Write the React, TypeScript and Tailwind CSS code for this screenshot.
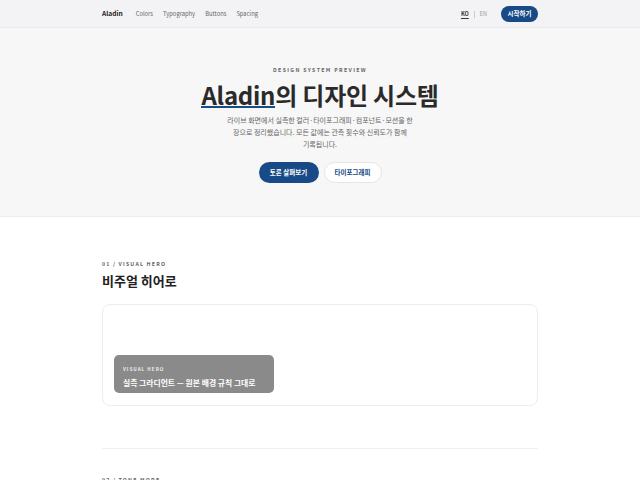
import React from "react";

const font = { fontFamily: '"Noto Sans CJK KR", "Noto Sans", sans-serif' };

function Header() {
  return (
    <header className="h-[28px] border-b border-[#e9e9ec] bg-[#f3f3f5]">
      <div className="mx-auto flex h-full w-[436px] items-center pt-px">
        <span className="text-[6.6px] font-bold text-[#222]">Aladin</span>
        <nav className="ml-[13px] flex gap-[10px] text-[5.8px] text-[#666]">
          <span>Colors</span>
          <span>Typography</span>
          <span>Buttons</span>
          <span>Spacing</span>
        </nav>
        <div className="ml-auto flex items-center">
          <span className="text-[5.5px] font-bold text-[#333] underline underline-offset-2">KO</span>
          <span className="mx-[5px] h-[7px] w-px bg-[#ccc]" />
          <span className="text-[5.5px] text-[#999]">EN</span>
          <button className="ml-[14px] h-[16px] w-[37px] rounded-full bg-[#174a86] text-[6.5px] font-bold text-white">
            시작하기
          </button>
        </div>
      </div>
    </header>
  );
}

function Hero() {
  return (
    <section className="border-b border-[#ececec] bg-[#f7f7f7] pb-[33px] pt-[38px]">
      <div className="flex flex-col items-center text-center">
        <p className="text-[5.3px] font-bold leading-[8px] tracking-[0.25em] text-[#666]">DESIGN SYSTEM PREVIEW</p>
        <h1 className="mt-[6px] text-[24px] font-bold leading-[30px] tracking-[-0.01em] text-[#2a2a2a]">
          <span className="relative inline-block">
            Aladin
            <span className="absolute bottom-[2px] left-0 h-[2.5px] w-full bg-[#174a86]" />
          </span>
          의 디자인 시스템
        </h1>
        <p className="mt-[4px] w-[196px] break-keep text-[7px] leading-[12px] text-[#666]">
          라이브 화면에서 실측한 컬러·타이포그래피·컴포넌트·모션을 한 장으로 정리했습니다. 모든 값에는 관측 횟수와 신뢰도가 함께 기록됩니다.
        </p>
        <div className="mt-[12px] flex gap-[5px]">
          <button className="h-[21px] w-[60px] rounded-full bg-[#174a86] text-[6.5px] font-bold text-white">
            토론 살펴보기
          </button>
          <button className="h-[21px] w-[58px] rounded-full border border-[#e6e6e6] bg-white text-[6.5px] font-bold text-[#174a86]">
            타이포그래피
          </button>
        </div>
      </div>
    </section>
  );
}

function VisualHero() {
  return (
    <section className="mx-auto w-[436px] pt-[43px]">
      <p className="text-[5.3px] font-bold leading-[8px] tracking-[0.22em] text-[#666]">01 / VISUAL HERO</p>
      <h2 className="mt-[4px] text-[13px] font-bold leading-[18px] text-[#222]">비주얼 히어로</h2>
      <div className="mt-[14px] flex h-[102px] flex-col justify-end rounded-[8px] border border-[#ececec] bg-white px-[11px] pb-[12px]">
        <div className="w-[160px] rounded-[5px] bg-[#8a8a8a] px-[9px] pb-[5.5px] pt-[11px]">
          <p className="text-[4.6px] font-bold leading-[6px] tracking-[0.22em] text-[#eee]">VISUAL HERO</p>
          <p className="mt-[4.5px] whitespace-nowrap text-[7.8px] font-bold leading-[11px] text-white">
            실측 그라디언트 — 원본 배경 규칙 그대로
          </p>
        </div>
      </div>
      <div className="mt-[42px] h-px bg-[#f0f0f0]" />
      <p className="mt-[27px] text-[5.3px] font-bold leading-[8px] tracking-[0.22em] text-[#666]">02 / TONE MODE</p>
    </section>
  );
}

export default function App() {
  return (
    <div className="min-h-screen bg-white" style={font}>
      <Header />
      <Hero />
      <VisualHero />
    </div>
  );
}
